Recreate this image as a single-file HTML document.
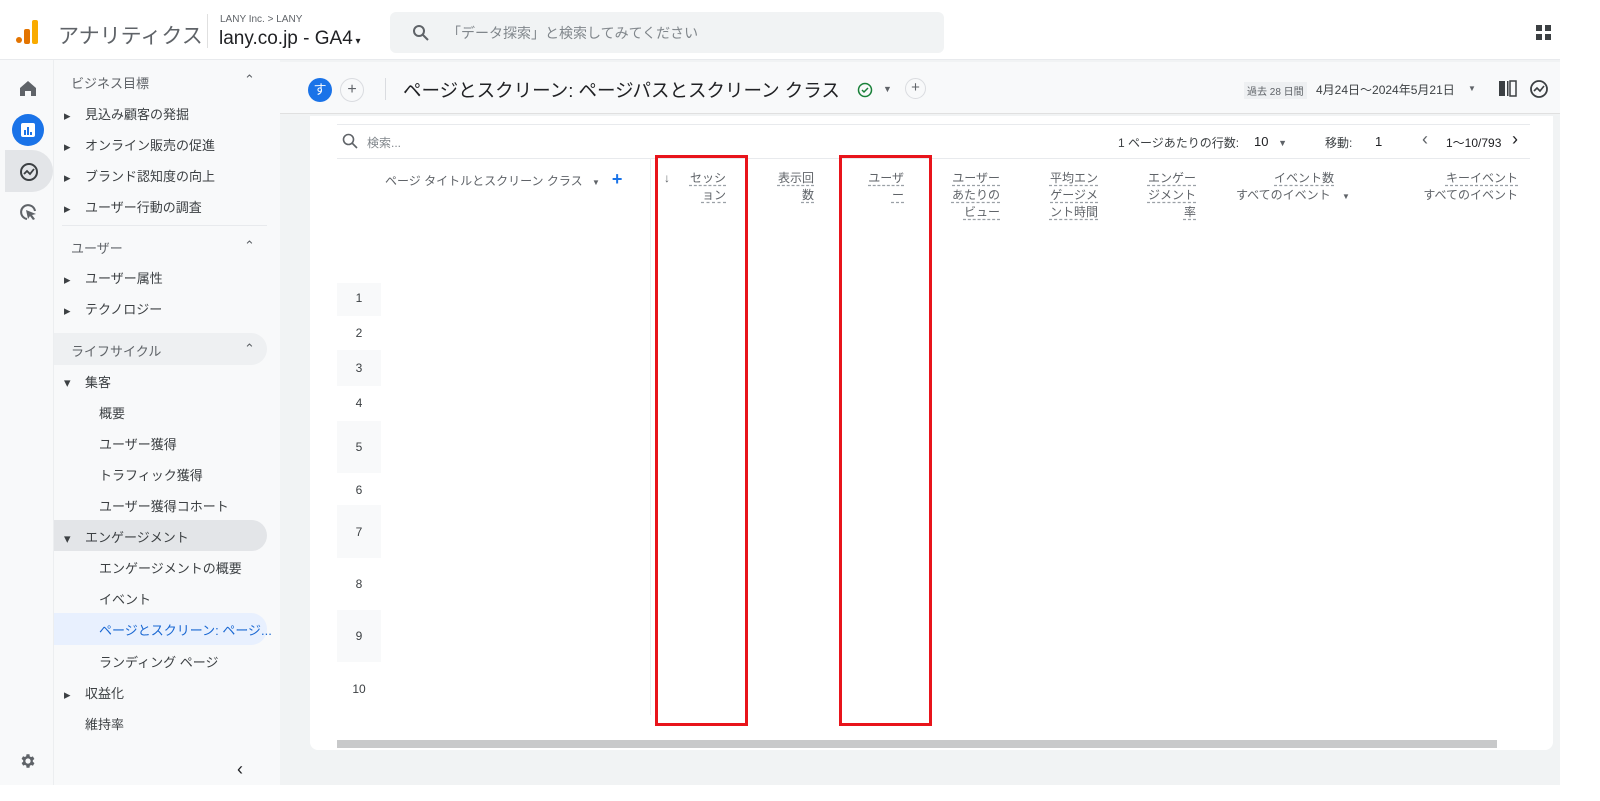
<!DOCTYPE html>
<html><head><meta charset="utf-8">
<style>
*{box-sizing:border-box;margin:0;padding:0}
body{width:1600px;height:801px;position:relative;overflow:hidden;background:#fff;font-family:"Liberation Sans","Noto Sans CJK JP",sans-serif;color:#3c4043}
.abs{position:absolute}
.top{left:0;top:0;width:1560px;height:60px;background:#fff;border-bottom:1px solid #e8eaed}
.rail{left:0;top:60px;width:53px;height:725px;background:#f8f9fa}
.nav{left:53px;top:60px;width:227px;height:725px;background:#f8f9fa;border-left:1px solid #eceef0}
.main{left:280px;top:60px;width:1280px;height:725px;background:#f1f3f4}
.nav div{position:absolute;font-size:13px;color:#3c4043;white-space:nowrap}
.nav .h{color:#5f6368}
.tri{font-size:8px;color:#3c4043}
.card{left:310px;top:116px;width:1243px;height:634px;background:#fff;border-radius:0 0 8px 8px}
.hd{position:absolute;font-size:12px;color:#5f6368;text-align:right;line-height:17px}
.hd u{text-decoration:underline dashed #9aa0a6;text-underline-offset:3px}
.num{position:absolute;left:337px;width:44px;font-size:12px;color:#3c4043;text-align:center}
.red{position:absolute;border:3px solid #e8141b}
</style></head><body>
<div class="abs top">
 <svg class="abs" style="left:16px;top:20px" width="24" height="26"><rect x="0" y="17" width="6" height="6" rx="3" fill="#e37400"/><rect x="8" y="9" width="6" height="15" rx="2" fill="#e37400"/><rect x="16" y="0" width="6" height="24" rx="2" fill="#f9ab00"/></svg>
 <div class="abs" style="left:58px;top:20px;font-size:21px;color:#5f6368">アナリティクス</div>
 <div class="abs" style="left:207px;top:14px;width:1px;height:34px;background:#e0e0e0"></div>
 <div class="abs" style="left:220px;top:14px;font-size:10px;color:#5f6368">LANY Inc. &gt; LANY</div>
 <div class="abs" style="left:219px;top:28px;font-size:19px;color:#202124">lany.co.jp - GA4<span style="font-size:10px"> ▾</span></div>
 <div class="abs" style="left:390px;top:12px;width:554px;height:41px;background:#f1f3f4;border-radius:6px"></div>
 <svg class="abs" style="left:412px;top:24px" width="18" height="18"><circle cx="7" cy="7" r="5" fill="none" stroke="#5f6368" stroke-width="2"/><path d="M11 11l5 5" stroke="#5f6368" stroke-width="2"/></svg>
 <div class="abs" style="left:447px;top:23px;font-size:14px;color:#80868b">「データ探索」と検索してみてください</div>
 <svg class="abs" style="left:1536px;top:25px" width="16" height="16"><rect x="0" y="0" width="6" height="6" fill="#3c4043"/><rect x="9" y="0" width="6" height="6" fill="#3c4043"/><rect x="0" y="9" width="6" height="6" fill="#3c4043"/><rect x="9" y="9" width="6" height="6" fill="#3c4043"/></svg>
</div>
<div class="abs rail">
 <svg class="abs" style="left:19px;top:20px" width="18" height="16"><path d="M1 8L9 1l8 7v8h-5v-5H6v5H1z" fill="#5f6368"/></svg>
 <div class="abs" style="left:12px;top:54px;width:32px;height:32px;border-radius:50%;background:#1a73e8"></div>
 <svg class="abs" style="left:20px;top:62px" width="16" height="16"><rect x="1" y="1" width="14" height="14" rx="2" fill="#fff"/><rect x="4" y="8" width="2" height="5" fill="#1a73e8"/><rect x="7" y="5" width="2" height="8" fill="#1a73e8"/><rect x="10" y="10" width="2" height="3" fill="#1a73e8"/></svg>
 <div class="abs" style="left:5px;top:90px;width:48px;height:42px;border-radius:0 21px 21px 0;background:#e3e5e8"></div>
 <svg class="abs" style="left:19px;top:102px" width="20" height="20"><circle cx="10" cy="10" r="8" fill="none" stroke="#3c4043" stroke-width="2"/><path d="M5 12l3-3 3 3 4-5" fill="none" stroke="#3c4043" stroke-width="1.8"/></svg>
 <svg class="abs" style="left:19px;top:143px" width="20" height="20"><path d="M16 8A7 7 0 1 0 8 16" fill="none" stroke="#5f6368" stroke-width="2"/><path d="M7 7l10 4-4 1 3 4-2 1-3-4-2 3z" fill="#5f6368"/></svg>
 <svg class="abs" style="left:19px;top:692px" width="18" height="18" viewBox="0 0 24 24"><path fill="#5f6368" d="M19.4 13a7.5 7.5 0 0 0 0-2l2.1-1.6-2-3.5-2.5 1a7 7 0 0 0-1.7-1L15 3h-4l-.4 2.7a7 7 0 0 0-1.7 1l-2.5-1-2 3.5L6.6 11a7.5 7.5 0 0 0 0 2l-2.1 1.6 2 3.5 2.5-1a7 7 0 0 0 1.7 1L11 21h4l.4-2.7a7 7 0 0 0 1.7-1l2.5 1 2-3.5zM13 15.5a3.5 3.5 0 1 1 0-7 3.5 3.5 0 0 1 0 7z" transform="translate(-1 0)"/></svg>
</div>
<div class="abs nav">
 <div class="h" style="left:17px;top:13px">ビジネス目標</div><div class="h" style="left:190px;top:12px">⌃</div>
 <div class="tri" style="left:10px;top:48px">▸</div><div style="left:31px;top:44px">見込み顧客の発掘</div>
 <div class="tri" style="left:10px;top:79px">▸</div><div style="left:31px;top:75px">オンライン販売の促進</div>
 <div class="tri" style="left:10px;top:110px">▸</div><div style="left:31px;top:106px">ブランド認知度の向上</div>
 <div class="tri" style="left:10px;top:141px">▸</div><div style="left:31px;top:137px">ユーザー行動の調査</div>
 <div style="left:8px;top:165px;width:205px;height:1px;background:#e8eaed"></div>
 <div class="h" style="left:17px;top:178px">ユーザー</div><div class="h" style="left:190px;top:178px">⌃</div>
 <div class="tri" style="left:10px;top:212px">▸</div><div style="left:31px;top:208px">ユーザー属性</div>
 <div class="tri" style="left:10px;top:243px">▸</div><div style="left:31px;top:239px">テクノロジー</div>
 <div style="left:0;top:273px;width:213px;height:32px;background:#eef0f2;border-radius:0 16px 16px 0"></div>
 <div class="h" style="left:17px;top:281px">ライフサイクル</div><div class="h" style="left:190px;top:281px">⌃</div>
 <div class="tri" style="left:10px;top:315px">▾</div><div style="left:31px;top:312px">集客</div>
 <div style="left:45px;top:343px">概要</div>
 <div style="left:45px;top:374px">ユーザー獲得</div>
 <div style="left:45px;top:405px">トラフィック獲得</div>
 <div style="left:45px;top:436px">ユーザー獲得コホート</div>
 <div style="left:0;top:460px;width:213px;height:31px;background:#e3e5e8;border-radius:0 16px 16px 0"></div>
 <div class="tri" style="left:10px;top:471px">▾</div><div style="left:31px;top:467px">エンゲージメント</div>
 <div style="left:45px;top:498px">エンゲージメントの概要</div>
 <div style="left:45px;top:529px">イベント</div>
 <div style="left:0;top:553px;width:213px;height:32px;background:#e8f0fe;border-radius:0 16px 16px 0"></div>
 <div style="left:45px;top:560px;color:#1967d2">ページとスクリーン: ページ...</div>
 <div style="left:45px;top:592px">ランディング ページ</div>
 <div class="tri" style="left:10px;top:627px">▸</div><div style="left:31px;top:623px">収益化</div>
 <div style="left:31px;top:654px">維持率</div>
 <div style="left:8px;top:688px;width:205px;height:1px;background:#e8eaed"></div>
</div>
<div class="abs main"></div>
<div class="abs" style="left:280px;top:62px;width:1280px;height:52px;background:#f8f9fa;border-bottom:1px solid #e0e0e0"></div>
<div class="abs" style="left:308px;top:78px;width:24px;height:24px;border-radius:50%;background:#1a73e8;color:#fff;font-size:13px;text-align:center;line-height:23px">す</div>
<div class="abs" style="left:340px;top:78px;width:24px;height:24px;border-radius:50%;border:1px solid #dadce0;text-align:center;line-height:21px;font-size:16px;color:#5f6368">+</div>
<div class="abs" style="left:385px;top:78px;width:1px;height:22px;background:#dadce0"></div>
<div class="abs" style="left:403px;top:77px;font-size:18.5px;color:#202124">ページとスクリーン: ページパスとスクリーン クラス</div>
<svg class="abs" style="left:857px;top:82px" width="16" height="16"><circle cx="8" cy="8" r="6.5" fill="none" stroke="#188038" stroke-width="1.5"/><path d="M5 8l2 2 4-4" fill="none" stroke="#188038" stroke-width="1.5"/></svg>
<div class="abs" style="left:883px;top:84px;font-size:9px;color:#5f6368">▼</div>
<div class="abs" style="left:905px;top:78px;width:21px;height:21px;border-radius:50%;border:1px solid #dadce0;text-align:center;line-height:18px;font-size:15px;color:#5f6368">+</div>
<div class="abs" style="left:1244px;top:82px;font-size:10px;color:#5f6368;background:#eef0f2;padding:1px 3px">過去 28 日間</div>
<div class="abs" style="left:1316px;top:81px;font-size:12px;color:#3c4043">4月24日～2024年5月21日</div>
<div class="abs" style="left:1468px;top:84px;font-size:8px;color:#5f6368">▼</div>
<svg class="abs" style="left:1498px;top:80px" width="20" height="18"><rect x="1" y="1" width="6" height="15" fill="#3c4043"/><rect x="9" y="1" width="1.5" height="15" fill="#3c4043"/><rect x="12" y="1" width="6" height="15" fill="none" stroke="#3c4043" stroke-width="1.5"/></svg>
<svg class="abs" style="left:1529px;top:79px" width="20" height="20"><circle cx="10" cy="10" r="8" fill="none" stroke="#3c4043" stroke-width="1.8"/><path d="M5 12l3-3 3 3 4-5" fill="none" stroke="#3c4043" stroke-width="1.6"/></svg>

<div class="abs card"></div>
<div class="abs" style="left:337px;top:124px;width:1193px;height:1px;background:#e8eaed"></div>
<svg class="abs" style="left:342px;top:133px" width="16" height="16"><circle cx="6.5" cy="6.5" r="5" fill="none" stroke="#5f6368" stroke-width="1.6"/><path d="M10 10l5 5" stroke="#5f6368" stroke-width="1.6"/></svg>
<div class="abs" style="left:367px;top:134px;font-size:12px;color:#80868b">検索...</div>
<div class="abs" style="left:1118px;top:134px;font-size:12px;color:#3c4043">1 ページあたりの行数:</div>
<div class="abs" style="left:1254px;top:134px;font-size:13px;color:#202124">10 <span style="font-size:9px;color:#5f6368;margin-left:6px">▼</span></div>
<div class="abs" style="left:1325px;top:134px;font-size:12px;color:#3c4043">移動:</div>
<div class="abs" style="left:1375px;top:134px;font-size:13px;color:#202124">1</div>
<div class="abs" style="left:1422px;top:129px;font-size:18px;color:#5f6368">‹</div>
<div class="abs" style="left:1446px;top:134px;font-size:12px;color:#202124">1～10/793</div>
<div class="abs" style="left:1512px;top:129px;font-size:18px;color:#202124">›</div>
<div class="abs" style="left:337px;top:158px;width:1193px;height:1px;background:#e8eaed"></div>

<div class="hd" style="left:385px;top:171px;text-align:left">ページ タイトルとスクリーン クラス <span style="font-size:8px;margin-left:6px">▼</span><span style="color:#1a73e8;font-size:18px;font-weight:bold;margin-left:12px">+</span></div>
<div class="abs" style="left:650px;top:158px;width:1px;height:557px;background:#eceef0"></div>
<div class="hd" style="left:664px;top:170px;text-align:left">↓</div>
<div class="hd" style="left:680px;top:170px;width:46px"><u>セッシ</u><br><u>ョン</u></div>
<div class="hd" style="left:766px;top:170px;width:48px"><u>表示回</u><br><u>数</u></div>
<div class="hd" style="left:856px;top:170px;width:48px"><u>ユーザ</u><br><u>ー</u></div>
<div class="hd" style="left:948px;top:170px;width:52px"><u>ユーザー</u><br><u>あたりの</u><br><u>ビュー</u></div>
<div class="hd" style="left:1040px;top:170px;width:58px"><u>平均エン</u><br><u>ゲージメ</u><br><u>ント時間</u></div>
<div class="hd" style="left:1140px;top:170px;width:56px"><u>エンゲー</u><br><u>ジメント</u><br><u>率</u></div>
<div class="hd" style="left:1236px;top:170px;width:130px;text-align:left"><span style="margin-left:38px"><u>イベント数</u></span><br>すべてのイベント <span style="font-size:8px;margin-left:8px">▼</span></div>
<div class="hd" style="left:1410px;top:170px;width:108px"><u>キーイベント</u><br>すべてのイベント</div>

<div class="abs" style="left:337px;top:283px;width:44px;height:33px;background:#f8f9fa"></div>
<div class="abs" style="left:337px;top:350px;width:44px;height:36px;background:#f8f9fa"></div>
<div class="abs" style="left:337px;top:421px;width:44px;height:52px;background:#f8f9fa"></div>
<div class="abs" style="left:337px;top:505px;width:44px;height:53px;background:#f8f9fa"></div>
<div class="abs" style="left:337px;top:610px;width:44px;height:52px;background:#f8f9fa"></div>
<div class="num" style="top:291px">1</div>
<div class="num" style="top:326px">2</div>
<div class="num" style="top:361px">3</div>
<div class="num" style="top:396px">4</div>
<div class="num" style="top:440px">5</div>
<div class="num" style="top:483px">6</div>
<div class="num" style="top:525px">7</div>
<div class="num" style="top:577px">8</div>
<div class="num" style="top:629px">9</div>
<div class="num" style="top:682px">10</div>

<div class="abs" style="left:337px;top:740px;width:1160px;height:8px;background:#c8c9ca"></div>
<div class="abs" style="left:280px;top:750px;width:1280px;height:35px;background:#f1f3f4"></div>
<div class="abs" style="left:53px;top:748px;width:227px;height:37px;background:#f8f9fa;border-left:1px solid #eceef0"></div>
<div class="abs" style="left:237px;top:759px;font-size:18px;color:#202124">‹</div>

<div class="red" style="left:655px;top:155px;width:93px;height:571px"></div>
<div class="red" style="left:839px;top:155px;width:93px;height:571px"></div>
</body></html>
